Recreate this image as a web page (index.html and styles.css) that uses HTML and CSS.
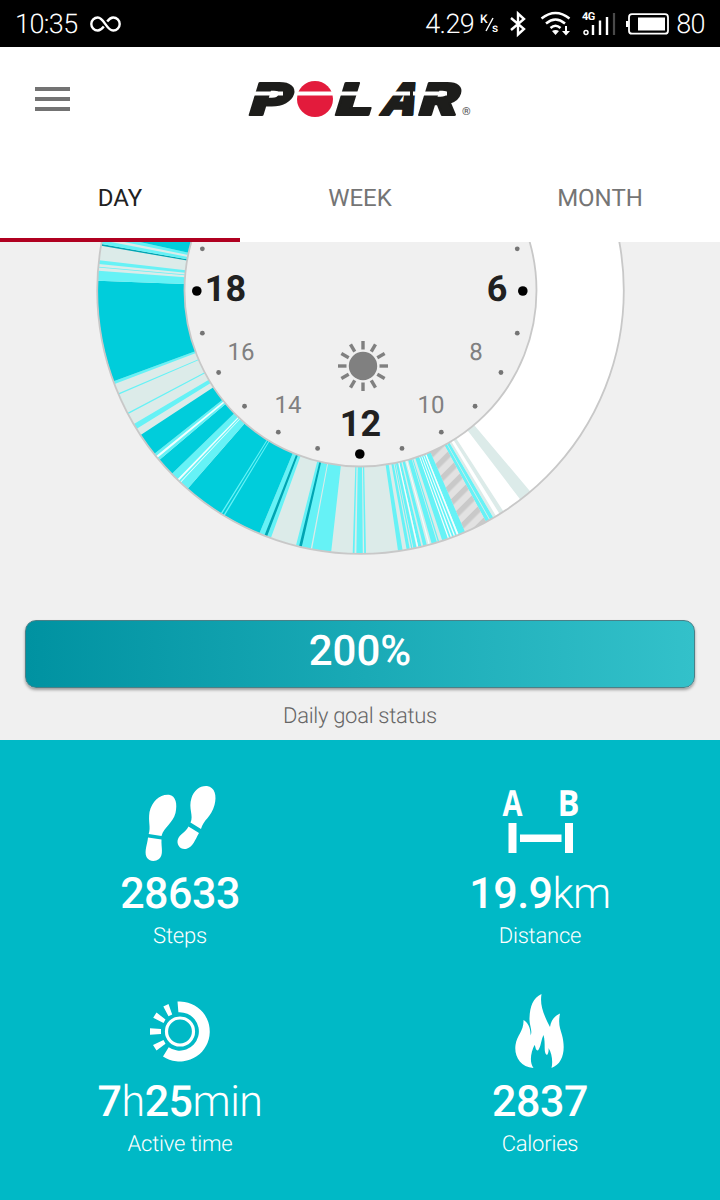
FILE: index.html
```html
<!DOCTYPE html>
<html lang="en">
<head>
    <meta charset="UTF-8">
    <meta name="viewport" content="width=device-width, initial-scale=1.0">
    <title>Polar Flow</title>
    <link rel="stylesheet" href="styles.css">
</head>
<body>
    <div class="status-bar">
        <div class="status-left">
            <span>10:35</span>
            <svg width="32" height="18" viewBox="0 0 32 18">
                <path d="M13.8 11.5 C11.500 14.500 10 15.500 7.800 15.500 A6.500 6.500 0 0 1 7.800 2.500 C14 2.500 16.500 15.500 23.200 15.500 A6.500 6.500 0 0 0 23.200 2.500 C21 2.500 19.500 3.500 17.200 6.500" fill="none" stroke="#fff" stroke-width="2.400"/>
            </svg>
        </div>
        <div class="status-right">
            <span>4.29</span>
            <svg class="speed" width="20" height="24" viewBox="0 0 20 24">
                <text x="0" y="11" class="speed-text">K</text>
                <path d="M6 19 L13 6" stroke="#fff" stroke-width="1.400"/>
                <text x="12" y="20" class="speed-text">s</text>
            </svg>
            <svg class="bluetooth" width="18" height="26" viewBox="0 0 18 26">
                <path d="M2 7 L15 18 L9 23.500 V2.500 L15 8 L2 19" fill="none" stroke="#fff" stroke-width="2.400"/>
            </svg>
            <svg class="wifi" width="32" height="26" viewBox="0 0 32 26">
                <path d="M1.500 7.500 Q15.500 -3.500 29.500 7.500 M6 12.500 Q15.500 4.500 25 12.500 M10.500 17 Q15.500 12.500 20.500 17" fill="none" stroke="#fff" stroke-width="2.500"/>
                <path d="M12 20 Q15.500 18 19 20 L15.500 24 Z M25 15 h2 v5 h3 l-4 4.500 -4 -4.500 h3 Z" fill="#fff"/>
            </svg>
            <svg class="signal" width="34" height="26" viewBox="0 0 34 26">
                <text x="0" y="9" class="net-text">4G</text>
                <circle cx="4" cy="21.500" r="2" fill="none" stroke="#fff" stroke-width="1.500"/>
                <path d="M11 14 V24 M18 9.500 V24 M25 6 V24" stroke="#fff" stroke-width="2.400"/>
                <path d="M32 2 V24" stroke="#4a4a4a" stroke-width="2.200"/>
            </svg>
            <svg class="battery" width="44" height="22" viewBox="0 0 44 22">
                <rect x="3" y="1.200" width="39" height="19.500" rx="3" fill="none" stroke="#fff" stroke-width="1.800"/>
                <rect x="0" y="8" width="2.500" height="6" fill="#fff"/>
                <rect x="12" y="4.500" width="27" height="13" fill="#fff"/>
            </svg>
            <span>80</span>
        </div>
    </div>

    <header class="header">
        <div class="menu-btn">
            <span></span>
            <span></span>
            <span></span>
        </div>
        <svg class="logo" width="234" height="44" viewBox="0 0 234 44">
            <g class="logo-text">
                <text transform="translate(0 38) skewX(-17)" textLength="41" lengthAdjust="spacingAndGlyphs">P</text>
                <text transform="translate(86 38) skewX(-17)" textLength="37" lengthAdjust="spacingAndGlyphs">L</text>
                <text transform="translate(131.500 38) skewX(-22)" textLength="35" lengthAdjust="spacingAndGlyphs">A</text>
                <text transform="translate(169.500 38) skewX(-17)" textLength="39" lengthAdjust="spacingAndGlyphs">R</text>
            </g>
            <circle cx="68" cy="22" r="18" fill="#e31b3c"/>
            <path d="M2 16.500 H36 M48 16.500 H163 M166 16.500 H200" stroke="#fff" stroke-width="4"/>
            <text x="215" y="38" class="reg">®</text>
        </svg>
    </header>

    <nav class="tabs">
        <div class="tab active">DAY</div>
        <div class="tab">WEEK</div>
        <div class="tab">MONTH</div>
    </nav>

    <main class="day">
        <svg class="dial" width="720" height="340" viewBox="0 242 720 340">
            <defs>
                <pattern id="hatch" width="12" height="12" patternUnits="userSpaceOnUse" patternTransform="rotate(-45)">
                    <rect width="12" height="12" fill="#e2e2e2"/>
                    <rect width="12" height="5.500" fill="#c9c9c9"/>
                </pattern>
            </defs>
            <circle cx="360.500" cy="290.500" r="219.500" fill="none" stroke="#fff" stroke-width="87"/>
            <g id="segments"></g>
            <circle cx="360.500" cy="290.500" r="263.300" class="ring-line"/>
            <circle cx="360.500" cy="290.500" r="176" class="ring-line"/>
            <g id="dots"></g>
            <g class="hours main-hours">
                <text x="225.500" y="301">18</text>
                <text x="497" y="301">6</text>
                <text x="360.500" y="436">12</text>
            </g>
            <g class="hours">
                <text x="241" y="360">16</text>
                <text x="288" y="413">14</text>
                <text x="431" y="413">10</text>
                <text x="476" y="360">8</text>
            </g>
            <circle cx="363" cy="366" r="14.200" fill="#808080"/>
            <g id="rays" stroke="#808080" stroke-width="3.400"></g>
        </svg>

        <div class="goal-bar">200%</div>
        <p class="goal-label">Daily goal status</p>
    </main>

    <section class="stats">
        <div class="stat">
            <svg width="80" height="78" viewBox="0 0 80 78">
                <path d="M8.700 50 C11 43 8 38 9.500 28 C12 17 20 10 29 10.800 C36 12 37.500 20 35.500 29 C33 39 24 43 21.500 52 Z M8 53.500 L21.500 55.500 C21 63 24 71 19 75 C15 78 9 77.500 6.500 73 C4 67 7.500 60 8 53.500 Z" fill="#fff"/>
                <path d="M50.500 38.500 C54 32 48 24 51.500 14 C54 6 60 1.500 67 2 C75 3 77 12 74.500 21 C71.500 33 63 36 61 45 Z M48.500 42.500 L59 49 C55 56 53 63 46 65 C40 66 36 60 38 55 C40 50 45 49 48.500 42.500 Z" fill="#fff"/>
            </svg>
            <div class="value">28633</div>
            <div class="label">Steps</div>
        </div>
        <div class="stat">
            <svg width="80" height="78" viewBox="0 0 80 78">
                <text x="2.500" y="31.500" class="ab" textLength="20" lengthAdjust="spacingAndGlyphs">A</text>
                <text x="57.500" y="31.500" class="ab" textLength="22" lengthAdjust="spacingAndGlyphs">B</text>
                <path d="M8.500 39 h8 v30 h-8 Z M65 39 h8 v30 h-8 Z M20 50.500 h41.500 v7.500 h-41.500 Z" fill="#fff"/>
            </svg>
            <div class="value">19.9<span>km</span></div>
            <div class="label">Distance</div>
        </div>
        <div class="stat">
            <svg width="80" height="78" viewBox="0 0 80 78">
                <circle cx="40" cy="39.500" r="13.500" fill="none" stroke="#fff" stroke-width="3.200"/>
                <path d="M37.500 9.600 A30 30 0 1 1 23 64.400 L28.700 55.200 A19.200 19.200 0 1 0 38.400 20.300 Z" fill="#fff"/>
                <path d="M23.300 14.500 L28.500 12 L32.200 22.500 L28.500 24.200 Z M13.200 25.800 L16.500 20.500 L25.500 27.500 L23.500 31 Z M10 36.300 L21 37 V42 L10 42.700 Z M13 53 L23.500 48 L25.500 51.800 L16.500 58.500 Z" fill="#fff"/>
            </svg>
            <div class="value">7<span>h</span>25<span>min</span></div>
            <div class="label">Active time</div>
        </div>
        <div class="stat">
            <svg width="80" height="78" viewBox="0 0 80 78">
                <path d="M41.500 2 C40 11 42 20 50 35 C51 29 54 24 60 21.500 C58 32 60 36 62 43 C66 58 63 72 51.500 76 C53 70 52 61 48.500 56 C49 59 48 62 47 63 C43 61 46 52 43.500 43 C41 48 41 55 38 58.500 C35 58 36 55 34.500 53 C31 60 29 70 33.500 76 C20 75 14 64 15.500 53 C17 43 24 39 23.500 28 C28 30 31 37 30.500 43.500 C33 39 29 33 29.500 26 C30 14 33 6 41.500 2 Z" fill="#fff"/>
            </svg>
            <div class="value">2837</div>
            <div class="label">Calories</div>
        </div>
    </section>

    <script src="dial.js"></script>
</body>
</html>
```
FILE: styles.css
```css
* {
    box-sizing: border-box;
}
body {
    margin: 0;
    width: 720px;
    height: 1200px;
    overflow: hidden;
    background-color: #fff;
    font-family: Roboto, "Liberation Sans", sans-serif;
    text-rendering: geometricPrecision;
}
.status-bar {
    display: flex;
    justify-content: space-between;
    align-items: center;
    height: 47px;
    padding: 0 15px;
    background-color: #000;
    color: #fff;
    font-size: 27px;
    font-weight: 300;
    letter-spacing: -0.6px;
}
.status-left,
.status-right {
    display: flex;
    align-items: center;
}
.status-left svg {
    margin-left: 12px;
}
.status-right svg {
    overflow: visible;
}
.speed {
    margin-left: 6px;
}
.speed-text {
    font-size: 12px;
    font-weight: 500;
    fill: #fff;
}
.bluetooth {
    margin-left: 9px;
}
.wifi {
    margin-left: 13px;
}
.signal {
    margin-left: 10px;
}
.net-text {
    font-size: 11px;
    font-weight: 700;
    fill: #fff;
}
.battery {
    margin: 0 6px 0 10px;
}
.header {
    display: flex;
    align-items: center;
    height: 103px;
    padding-left: 35px;
}
.menu-btn {
    display: flex;
    flex-direction: column;
    gap: 6px;
    width: 35px;
}
.menu-btn span {
    height: 4px;
    background-color: #737373;
}
.logo {
    margin-left: 177px;
    overflow: visible;
}
.logo-text {
    font-family: Inter, sans-serif;
    font-size: 44px;
    font-weight: 900;
    fill: #1d1d1b;
    stroke: #1d1d1b;
    stroke-width: 1.8;
    stroke-linejoin: round;
}
.reg {
    font-size: 11px;
    fill: #555;
}
.tabs {
    display: flex;
    height: 92px;
}
.tab {
    flex: 1;
    padding-top: 20px;
    border-bottom: 4px solid transparent;
    text-align: center;
    font-size: 24px;
    line-height: 56px;
    color: #757575;
}
.tab.active {
    color: #212121;
    border-bottom-color: #b00020;
}
.day {
    height: 498px;
    background-color: #f0f0f0;
}
.dial {
    display: block;
}
.ring-line {
    fill: none;
    stroke: #c8c8c8;
    stroke-width: 1.8;
}
.hours text {
    font-size: 24px;
    text-anchor: middle;
    fill: #808080;
}
.main-hours text {
    font-size: 36px;
    font-weight: 700;
    fill: #212121;
}
.goal-bar {
    height: 68px;
    margin: 38px 25px 0;
    border: 1px solid #4b8087;
    border-radius: 11px;
    background: linear-gradient(to right, #0092a1, #33c1ca);
    box-shadow: 0 2px 3px rgba(0, 0, 0, 0.35);
    color: #fff;
    font-size: 42px;
    font-weight: 500;
    line-height: 62px;
    text-align: center;
}
.goal-label {
    margin: 16px 0 0;
    font-size: 22px;
    font-weight: 300;
    line-height: 26px;
    letter-spacing: -0.3px;
    text-align: center;
    color: #666;
}
.stats {
    display: grid;
    grid-template-columns: 1fr 1fr;
    grid-auto-rows: 208px;
    height: 460px;
    padding-top: 44px;
    background-color: #00b9c6;
    color: #fff;
}
.stat {
    text-align: center;
}
.stat svg {
    display: block;
    margin: 0 auto 7px;
    overflow: visible;
}
.ab {
    font-family: "Open Sans", sans-serif;
    font-size: 36px;
    font-weight: 700;
    fill: #fff;
}
.value {
    font-size: 43px;
    font-weight: 500;
    line-height: 50px;
    letter-spacing: -0.5px;
}
.value span {
    font-weight: 300;
}
.label {
    margin-top: 5px;
    font-size: 22px;
    font-weight: 300;
    line-height: 26px;
    letter-spacing: -0.2px;
}
```
FILE: dial.js
```javascript
const NS = 'http://www.w3.org/2000/svg';
const CX = 360.5;
const CY = 290.5;

const colors = {
    rest: '#dcebe9',
    low: '#66f2f6',
    mid: '#00cddb',
    high: '#00a5b3',
    white: '#f2ffff',
    off: 'url(#hatch)'
};

// Degrees from 12 o'clock at the bottom, clockwise towards 18
const segments = [
    [-40.2, -37.4, 'rest'],
    [-32.9, -31.9, 'rest'],
    [-31, -30.3, 'rest'],
    [-30.3, 110, 'rest'],
    [-30.3, -29.5, 'low'],
    [-29.3, -28.5, 'low'],
    [-28.5, -23.4, 'off'],
    [-23.4, -21.9, 'low'],
    [-21.9, -19.4, 'white'],
    [-21.5, -21.1, 'low'],
    [-20.8, -20.4, 'low'],
    [-20.1, -19.7, 'low'],
    [-19.4, -18.1, 'low'],
    [-17.4, -17.1, 'low'],
    [-16.9, -15.7, 'low'],
    [-15.3, -15, 'white'],
    [-14.6, -13.8, 'low'],
    [-13.4, -12.7, 'low'],
    [-12.7, -12.4, 'white'],
    [-12.3, -11.6, 'low'],
    [-11.4, -11.1, 'low'],
    [-10.8, -10.1, 'low'],
    [-9.2, -8.2, 'low'],
    [-1.2, -0.8, 'low'],
    [-0.5, 0.9, 'low'],
    [1.3, 1.7, 'low'],
    [6.4, 10.6, 'low'],
    [10.9, 14.2, 'low'],
    [12.9, 13.5, 'high'],
    [19.9, 22.6, 'low'],
    [20.8, 21.4, 'high'],
    [22.6, 41.1, 'mid'],
    [31.1, 31.4, 'low'],
    [31.8, 32.1, 'low'],
    [41.1, 45.8, 'low'],
    [43.1, 43.3, 'white'],
    [43.7, 44.1, 'white'],
    [45.8, 49.9, 'mid'],
    [49.9, 51.6, 'low'],
    [50.5, 51, 'white'],
    [51.6, 56.7, 'mid'],
    [58.3, 59.5, 'low'],
    [62, 62.3, 'low'],
    [66.7, 67, 'low'],
    [69.2, 69.8, 'low'],
    [69.8, 92.1, 'mid'],
    [92.1, 94.3, 'low'],
    [95, 95.2, 'low'],
    [95.8, 96.6, 'low'],
    [99.8, 100.2, 'high'],
    [100.2, 101, 'low'],
    [101.6, 102.4, 'low'],
    [102.4, 110, 'mid']
];

function point(deg, r) {
    const a = deg * Math.PI / 180;
    return (CX - r * Math.sin(a)).toFixed(2) + ' ' + (CY + r * Math.cos(a)).toFixed(2);
}

function add(parent, tag, attrs) {
    const el = document.createElementNS(NS, tag);
    for (const key in attrs) {
        el.setAttribute(key, attrs[key]);
    }
    document.getElementById(parent).appendChild(el);
}

segments.forEach(function([from, to, type]) {
    add('segments', 'path', {
        d: 'M' + point(from, 263) + ' A263 263 0 0 1 ' + point(to, 263) +
           ' L' + point(to, 176) + ' A176 176 0 0 0 ' + point(from, 176) + ' Z',
        fill: colors[type]
    });
});

// Hour dots, bigger at 6, 12 and 18
for (let deg = -105; deg <= 105; deg += 15) {
    const big = deg % 90 === 0;
    const [x, y] = point(deg, 163).split(' ');
    add('dots', 'circle', { cx: x - 0.7, cy: Number(y) + 0.5, r: big ? 4.8 : 2.4, fill: big ? '#000' : '#757575' });
}

// Sun rays
for (let i = 0; i < 12; i++) {
    add('rays', 'path', { d: 'M363 349.5 V341', transform: 'rotate(' + i * 30 + ' 363 366)' });
}
```
